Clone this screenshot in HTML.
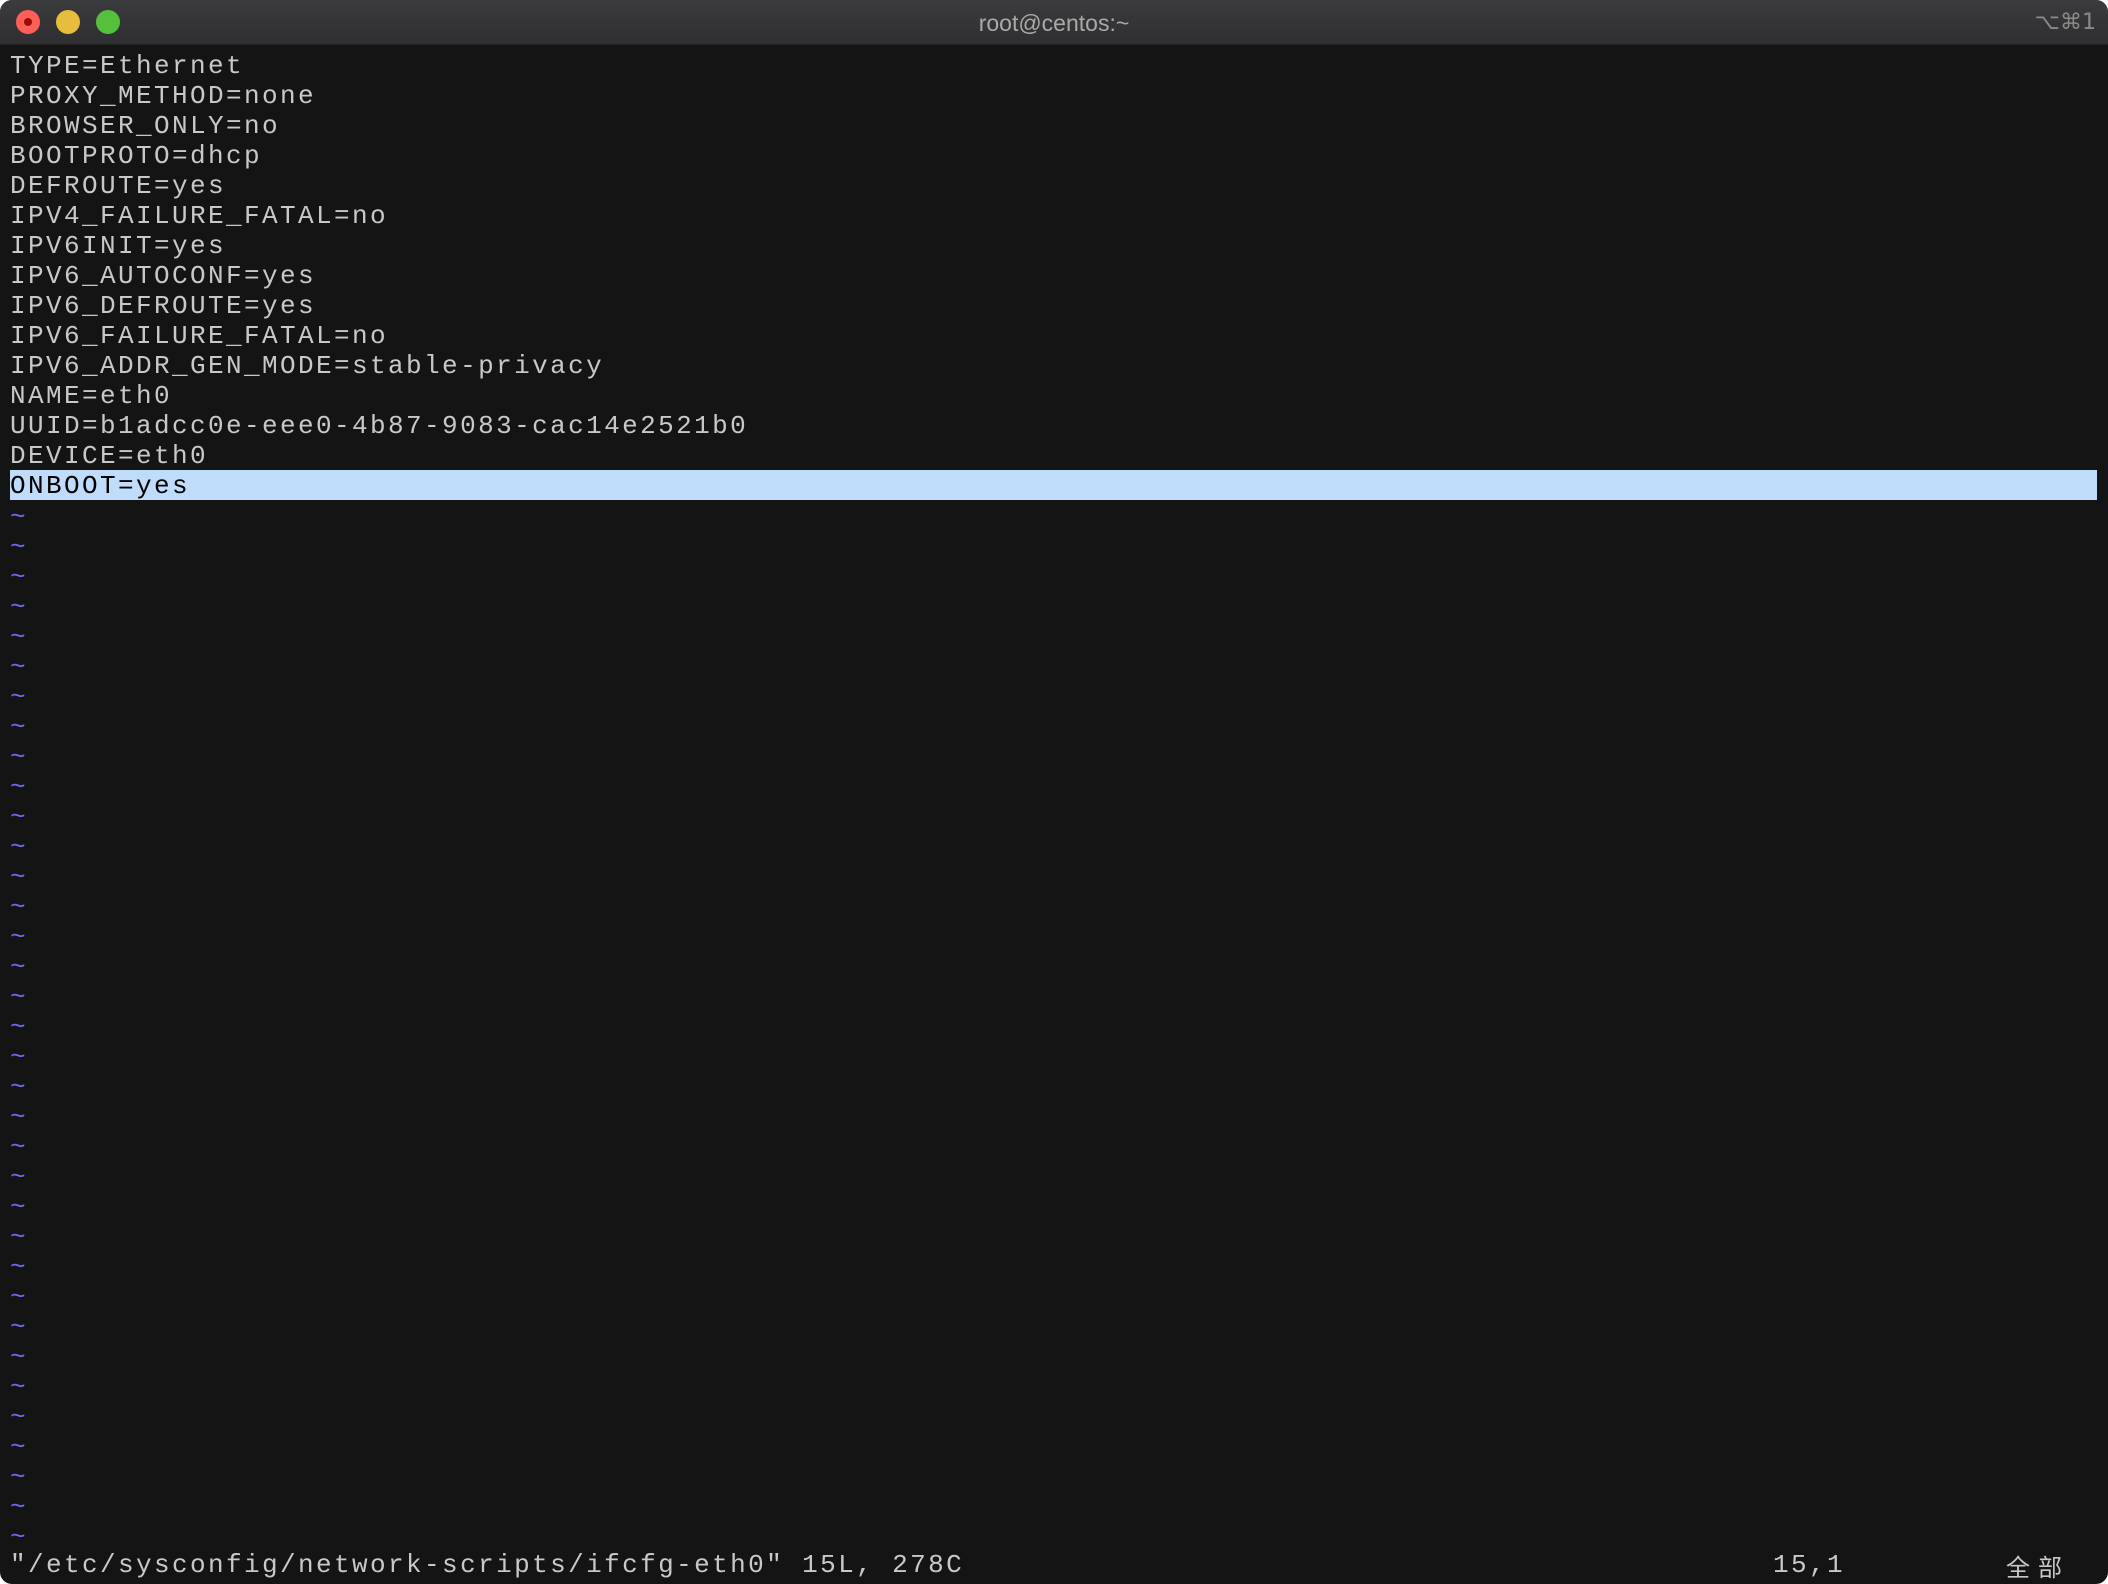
<!DOCTYPE html>
<html><head><meta charset="utf-8"><style>
html,body{margin:0;padding:0;width:2108px;height:1584px;overflow:hidden;background:#fff}
.win{position:absolute;left:0;top:0;width:2108px;height:1584px;background:#141414;border-radius:12px;overflow:hidden}
.tb{position:absolute;left:0;top:0;width:2108px;height:44px;background:linear-gradient(#3b3b3d,#2f2f31);border-bottom:1px solid #222}
.dot{position:absolute;top:10px;width:24px;height:24px;border-radius:50%}
.title{position:absolute;left:0;right:0;top:10px;text-align:center;color:#a9a9a9;font:23px "Liberation Sans",sans-serif}
.sc{position:absolute;right:12px;top:10px;color:#8a8a8a;font:22px "DejaVu Sans",sans-serif}
.ln{position:absolute;left:10px;height:30px;line-height:30px;font:26px "Liberation Mono","Noto Sans CJK SC",monospace;letter-spacing:2.4px;color:#c8c8c8;white-space:pre}
.hl{position:absolute;left:10px;top:470px;width:2087px;height:30px;background:#bfdcfb}
.t{color:#6b6bf0}
</style></head><body><div class="win">
<div class="tb">
<div class="dot" style="left:16px;background:#fe5f57"><div style="position:absolute;left:8px;top:8px;width:8px;height:8px;border-radius:50%;background:#9a0d06"></div></div>
<div class="dot" style="left:56px;background:#e6bd3d"></div>
<div class="dot" style="left:96px;background:#55c13b"></div>
<div class="title">root@centos:~</div>
<div class="sc">⌥⌘1</div>
</div>
<div class="hl"></div>
<div class="ln" style="top:51px">TYPE=Ethernet</div>
<div class="ln" style="top:81px">PROXY_METHOD=none</div>
<div class="ln" style="top:111px">BROWSER_ONLY=no</div>
<div class="ln" style="top:141px">BOOTPROTO=dhcp</div>
<div class="ln" style="top:171px">DEFROUTE=yes</div>
<div class="ln" style="top:201px">IPV4_FAILURE_FATAL=no</div>
<div class="ln" style="top:231px">IPV6INIT=yes</div>
<div class="ln" style="top:261px">IPV6_AUTOCONF=yes</div>
<div class="ln" style="top:291px">IPV6_DEFROUTE=yes</div>
<div class="ln" style="top:321px">IPV6_FAILURE_FATAL=no</div>
<div class="ln" style="top:351px">IPV6_ADDR_GEN_MODE=stable-privacy</div>
<div class="ln" style="top:381px">NAME=eth0</div>
<div class="ln" style="top:411px">UUID=b1adcc0e-eee0-4b87-9083-cac14e2521b0</div>
<div class="ln" style="top:441px">DEVICE=eth0</div>
<div class="ln" style="top:471px;color:#000">ONBOOT=yes</div>
<div class="ln t" style="top:502px;line-height:30px">~
~
~
~
~
~
~
~
~
~
~
~
~
~
~
~
~
~
~
~
~
~
~
~
~
~
~
~
~
~
~
~
~
~
~</div>
<div class="ln" style="top:1550px">"/etc/sysconfig/network-scripts/ifcfg-eth0" 15L, 278C</div>
<div class="ln" style="top:1550px;left:1773px">15,1</div>
<div class="ln" style="top:1548px;left:2006px;font-size:24px;letter-spacing:8px">全部</div>
</div></body></html>
